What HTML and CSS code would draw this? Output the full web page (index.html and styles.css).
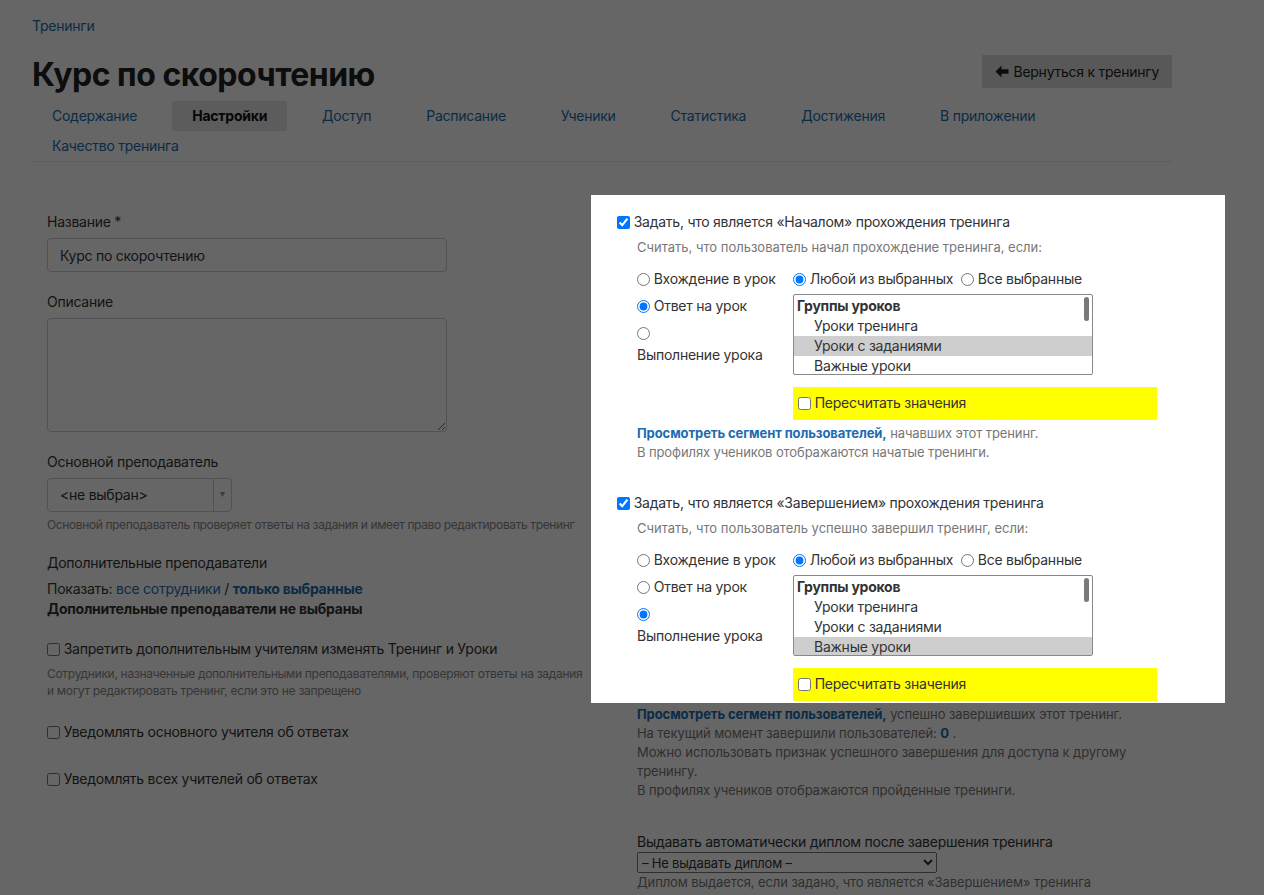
FILE: index.html
```html
<!DOCTYPE html>
<html lang="ru">
<head>
    <meta charset="UTF-8">
    <meta name="viewport" content="width=device-width, initial-scale=1.0">
    <title>Курс по скорочтению</title>
    <link rel="stylesheet" href="styles.css">
</head>
<body>
    <div class="container">
        <div class="breadcrumbs"><a href="#">Тренинги</a></div>

        <div class="page-header">
            <h1>Курс по скорочтению</h1>
            <button class="btn-back">
                <svg width="14" height="13" viewBox="0 0 14 13"><path d="M6.5 0.5 L0.5 6.5 L6.5 12.5 L6.5 8.8 L13.5 8.8 L13.5 4.2 L6.5 4.2 Z" fill="#222"/></svg>
                Вернуться к тренингу
            </button>
        </div>

        <ul class="tabs">
            <li><a href="#">Содержание</a></li>
            <li class="active"><a href="#">Настройки</a></li>
            <li><a href="#">Доступ</a></li>
            <li><a href="#">Расписание</a></li>
            <li><a href="#">Ученики</a></li>
            <li><a href="#">Статистика</a></li>
            <li><a href="#">Достижения</a></li>
            <li><a href="#">В приложении</a></li>
            <li><a href="#">Качество тренинга</a></li>
        </ul>

        <div class="settings">
            <div class="col">
                <div class="form-group">
                    <label class="field-label">Название *</label>
                    <input type="text" class="text-input" value="Курс по скорочтению">
                </div>
                <div class="form-group">
                    <label class="field-label">Описание</label>
                    <textarea class="text-area"></textarea>
                </div>
                <div class="form-group">
                    <label class="field-label">Основной преподаватель</label>
                    <div class="chosen">
                        <span class="chosen-value">&lt;не выбран&gt;</span>
                        <span class="chosen-arrow">▾</span>
                    </div>
                    <div class="help">Основной преподаватель проверяет ответы на задания и имеет право редактировать тренинг</div>
                </div>
                <div class="form-group">
                    <label class="field-label">Дополнительные преподаватели</label>
                    <div class="line">Показать: <a href="#">все сотрудники</a> / <a href="#" class="strong">только выбранные</a></div>
                    <div class="line bold">Дополнительные преподаватели не выбраны</div>
                </div>
                <div class="form-group">
                    <label class="check"><input type="checkbox"> Запретить дополнительным учителям изменять Тренинг и Уроки</label>
                    <div class="help spaced">Сотрудники, назначенные дополнительными преподавателями, проверяют ответы на задания и могут редактировать тренинг, если это не запрещено</div>
                </div>
                <div class="form-group gap-top">
                    <label class="check"><input type="checkbox"> Уведомлять основного учителя об ответах</label>
                </div>
                <div class="form-group gap-more">
                    <label class="check"><input type="checkbox"> Уведомлять всех учителей об ответах</label>
                </div>
            </div>

            <div class="col">
                <div class="condition">
                    <label class="check"><input type="checkbox" checked> Задать, что является «Началом» прохождения тренинга</label>
                    <div class="condition-body">
                        <div class="muted">Считать, что пользователь начал прохождение тренинга, если:</div>
                        <div class="condition-grid">
                            <div class="event-types">
                                <label class="radio"><input type="radio" name="start-type"> Вхождение в урок</label>
                                <label class="radio"><input type="radio" name="start-type" checked> Ответ на урок</label>
                                <label class="radio"><input type="radio" name="start-type"><span class="radio-wrap">Выполнение урока</span></label>
                            </div>
                            <div class="event-lessons">
                                <div class="mode">
                                    <label class="radio"><input type="radio" name="start-mode" checked> Любой из выбранных</label>
                                    <label class="radio"><input type="radio" name="start-mode"> Все выбранные</label>
                                </div>
                                <div class="listbox">
                                    <div class="list-group">Группы уроков</div>
                                    <div class="list-item">Уроки тренинга</div>
                                    <div class="list-item selected">Уроки с заданиями</div>
                                    <div class="list-item">Важные уроки</div>
                                    <span class="list-thumb"></span>
                                </div>
                                <div class="recount">
                                    <label class="check"><input type="checkbox"> Пересчитать значения</label>
                                </div>
                            </div>
                        </div>
                        <div class="note"><a href="#" class="strong">Просмотреть сегмент пользователей,</a> начавших этот тренинг.</div>
                        <div class="note">В профилях учеников отображаются начатые тренинги.</div>
                    </div>
                </div>

                <div class="condition">
                    <label class="check"><input type="checkbox" checked> Задать, что является «Завершением» прохождения тренинга</label>
                    <div class="condition-body">
                        <div class="muted">Считать, что пользователь успешно завершил тренинг, если:</div>
                        <div class="condition-grid">
                            <div class="event-types">
                                <label class="radio"><input type="radio" name="finish-type"> Вхождение в урок</label>
                                <label class="radio"><input type="radio" name="finish-type"> Ответ на урок</label>
                                <label class="radio"><input type="radio" name="finish-type" checked><span class="radio-wrap">Выполнение урока</span></label>
                            </div>
                            <div class="event-lessons">
                                <div class="mode">
                                    <label class="radio"><input type="radio" name="finish-mode" checked> Любой из выбранных</label>
                                    <label class="radio"><input type="radio" name="finish-mode"> Все выбранные</label>
                                </div>
                                <div class="listbox">
                                    <div class="list-group">Группы уроков</div>
                                    <div class="list-item">Уроки тренинга</div>
                                    <div class="list-item">Уроки с заданиями</div>
                                    <div class="list-item selected">Важные уроки</div>
                                    <span class="list-thumb"></span>
                                </div>
                                <div class="recount">
                                    <label class="check"><input type="checkbox"> Пересчитать значения</label>
                                </div>
                            </div>
                        </div>
                        <div class="note"><a href="#" class="strong">Просмотреть сегмент пользователей,</a> успешно завершивших этот тренинг.</div>
                        <div class="note">На текущий момент завершили пользователей: <a href="#" class="strong">0</a> .</div>
                        <div class="note">Можно использовать признак успешного завершения для доступа к другому тренингу.</div>
                        <div class="note">В профилях учеников отображаются пройденные тренинги.</div>

                        <div class="diploma">
                            <div class="diploma-label">Выдавать автоматически диплом после завершения тренинга</div>
                            <select class="diploma-select">
                                <option>– Не выдавать диплом –</option>
                            </select>
                            <div class="note">Диплом выдается, если задано, что является «Завершением» тренинга</div>
                        </div>
                    </div>
                </div>
            </div>
        </div>
    </div>

    <!-- tour spotlight over the completion settings -->
    <div class="spotlight"></div>
</body>
</html>
```

FILE: styles.css
```css
body {
    font-family: Inter, "Noto Sans", sans-serif;
    font-size: 14px;
    line-height: 20px;
    letter-spacing: -0.25px;
    color: #333;
    background-color: #fff;
    margin: 0;
    position: relative;
}

a {
    color: #1a6db0;
    text-decoration: none;
}

a.strong {
    font-weight: 700;
}

.container {
    width: 1140px;
    margin-left: 32px;
    padding-bottom: 40px;
}

.breadcrumbs {
    padding-top: 16px;
}

.page-header {
    display: flex;
    justify-content: space-between;
    align-items: flex-start;
    margin-top: 19px;
}

h1 {
    margin: 0;
    font-size: 32px;
    line-height: 40px;
    font-weight: 700;
    color: #222;
    letter-spacing: -0.5px;
}

.btn-back {
    display: flex;
    align-items: center;
    gap: 4px;
    height: 33px;
    padding: 0 13px;
    background-color: #dcdcdc;
    border: none;
    border-radius: 0;
    font-family: inherit;
    font-size: 14px;
    letter-spacing: -0.25px;
    color: #222;
    cursor: pointer;
}

.tabs {
    list-style: none;
    display: flex;
    flex-wrap: wrap;
    margin: 6px 0 0;
    padding: 0;
    border-bottom: 1px solid #ececec;
}

.tabs li {
    margin-right: 15px;
}

.tabs li a {
    display: block;
    padding: 0 20px;
    line-height: 30px;
}

.tabs li.active a {
    background-color: #e6e6e6;
    color: #111;
    font-weight: 700;
}

.settings {
    display: flex;
    margin-top: 50px;
}

.col {
    width: 570px;
    padding: 0 15px;
    box-sizing: border-box;
}

.form-group {
    margin-bottom: 20px;
}

.form-group.gap-top {
    margin-top: 23px;
}

.form-group.gap-more {
    margin-top: 27px;
}

.field-label {
    display: block;
    margin-bottom: 6px;
}

.text-input {
    display: block;
    width: 400px;
    height: 34px;
    box-sizing: border-box;
    padding: 0 12px;
    border: 1px solid #ccc;
    border-radius: 4px;
    font-family: inherit;
    font-size: 14px;
    letter-spacing: -0.25px;
    color: #333;
}

.text-area {
    display: block;
    width: 400px;
    height: 114px;
    box-sizing: border-box;
    border: 1px solid #ccc;
    border-radius: 4px;
}

.chosen {
    display: flex;
    width: 185px;
    height: 34px;
    box-sizing: border-box;
    border: 1px solid #ccc;
    border-radius: 4px;
}

.chosen-value {
    flex: 1;
    padding-left: 12px;
    line-height: 32px;
}

.chosen-arrow {
    width: 17px;
    border-left: 1px solid #ccc;
    text-align: center;
    font-size: 10px;
    line-height: 28px;
    color: #999;
}

.help {
    margin-top: 4px;
    font-size: 12px;
    line-height: 17px;
    letter-spacing: -0.38px;
    color: #888;
}

.help.spaced {
    margin-top: 6px;
    letter-spacing: -0.3px;
}

.line.bold {
    font-weight: 700;
}

.check,
.radio {
    display: block;
}

.check input,
.radio input {
    margin: 0;
    vertical-align: -2px;
}

.condition {
    margin-bottom: 31px;
}

.condition-body {
    padding-left: 20px;
    padding-top: 5px;
}

.muted {
    font-size: 13px;
    letter-spacing: 0;
    color: #777;
}

.condition-grid {
    display: flex;
    margin-top: 12px;
}

.event-types {
    flex-shrink: 0;
    width: 156px;
}

.event-types .radio {
    margin-bottom: 7px;
}

.radio-wrap {
    display: block;
    margin-top: 2px;
}

.mode {
    display: flex;
    gap: 8px;
}

.listbox {
    position: relative;
    width: 300px;
    height: 81px;
    box-sizing: border-box;
    margin-top: 5px;
    padding-top: 1px;
    border: 1px solid #888;
    border-radius: 2px;
    overflow: hidden;
}

.list-group {
    padding-left: 3px;
    font-weight: 700;
}

.list-item {
    padding-left: 20px;
}

.list-item.selected {
    background-color: #cecece;
}

.list-thumb {
    position: absolute;
    right: 3px;
    top: 2px;
    width: 5px;
    height: 24px;
    border-radius: 3px;
    background-color: #7a7a7a;
}

.recount {
    width: 364px;
    box-sizing: border-box;
    margin-top: 12px;
    padding: 6px 5px 7px;
    background-color: #ffff00;
}

.note {
    font-size: 13px;
    line-height: 19px;
    letter-spacing: -0.1px;
    color: #777;
}

.condition-grid + .note {
    margin-top: 4px;
}

.diploma {
    margin-top: 32px;
}

.diploma-label {
    color: #333;
}

.diploma-select {
    display: block;
    width: 300px;
    height: 21px;
    font-family: inherit;
    font-size: 13px;
    letter-spacing: -0.2px;
    color: #333;
    margin: 0;
}

.spotlight {
    position: absolute;
    left: 591px;
    top: 195px;
    width: 634px;
    height: 508px;
    box-shadow: 0 0 0 3000px rgba(0, 0, 0, 0.6);
    pointer-events: none;
}
```
